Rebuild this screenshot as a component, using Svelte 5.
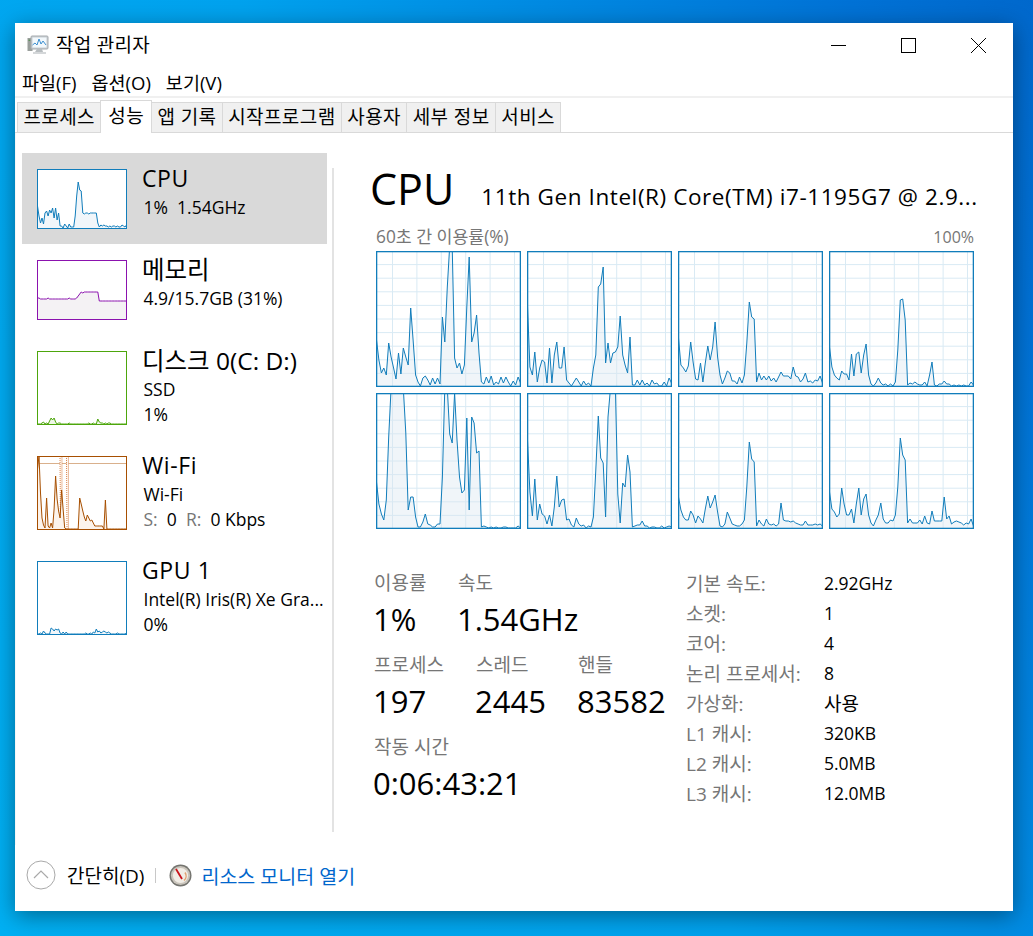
<script>
    const W = 145, H = 136;

    // height above the baseline in px, one value per second
    const cores = [
        [46,26,13,18,11,43,29,18,7,33,12,38,29,21,78,46,11,4,0,8,10,6,1,8,2,8,2,69,44,99,140,140,28,18,23,12,21,79,129,44,53,71,33,4,2,9,3,10,1,4,2,9,3,9,4,0,5,1,9,3],
        [80,19,11,34,4,18,26,24,3,38,3,31,44,18,18,39,6,3,0,4,8,4,0,5,1,3,0,18,31,99,102,119,23,43,23,33,34,39,70,31,21,13,49,1,1,6,1,6,1,3,0,6,2,3,0,0,4,0,8,3],
        [48,21,18,14,20,44,24,7,6,23,4,23,40,26,39,64,29,11,2,8,15,13,5,5,2,9,3,11,43,84,69,67,4,13,6,10,6,10,5,8,4,9,14,10,10,10,7,19,10,9,4,7,13,4,5,3,6,5,10,3],
        [39,19,11,8,6,15,12,12,6,32,10,32,34,13,31,42,11,2,0,3,8,3,1,2,0,2,0,4,36,86,87,66,1,3,2,4,2,1,1,4,0,11,24,1,0,2,2,5,2,2,0,1,0,1,0,1,0,0,4,1],
        [46,24,14,8,28,91,140,140,140,140,140,140,95,18,31,31,11,1,1,6,14,4,3,1,1,4,4,51,140,140,94,85,135,88,51,35,38,110,18,111,105,75,77,1,2,1,0,1,0,1,0,0,1,1,0,0,0,0,2,0],
        [88,36,12,49,8,24,14,12,4,13,2,21,52,21,28,29,8,9,3,1,10,4,2,3,0,2,1,11,58,112,70,65,11,111,140,140,140,34,5,45,41,73,56,1,2,3,3,7,2,2,0,1,1,0,0,2,0,1,2,1],
        [31,18,11,8,8,17,13,5,12,9,5,19,32,20,26,33,16,2,1,4,16,10,4,3,2,2,4,8,41,86,69,66,2,8,4,2,9,4,3,4,2,4,25,8,7,7,6,7,5,4,3,3,7,3,3,3,4,3,4,2],
        [36,19,16,11,14,40,24,13,13,19,5,24,40,13,29,34,13,5,2,8,13,25,9,5,5,8,7,13,41,90,73,68,5,9,5,5,5,8,4,12,5,4,17,7,7,7,7,31,9,12,4,6,7,6,5,3,5,4,9,2]
    ];

    const cpuMini = [22,12,5,10,4,15,17,12,18,15,20,10,20,8,15,2,2,0,4,2,0,4,1,1,1,12,32,46,38,37,15,14,15,15,14,15,15,15,15,15,5,1,3,2,3,2,2,1,2,1,2,2,1,2,1,1,3,2,1,3];
    const memMini = [21,21,20,20,20,20,20,21,20,20,20,20,20,20,20,20,20,20,20,20,20,21,20,20,20,20,21,23,25,27,26,27,27,27,27,27,27,27,27,27,27,18,18,18,18,18,18,18,18,18,18,18,18,18,18,18,18,18,18,18];
    const diskMini = [0,0,0,1,2,0,1,0,3,6,4,6,2,0,1,1,0,0,0,0,0,1,0,0,0,0,0,0,0,0,0,0,0,0,1,0,0,1,0,0,5,2,1,1,0,1,0,1,1,0,0,0,0,0,0,0,0,0,0,0];
    const gpuMini = [0,0,1,0,3,1,0,0,0,6,5,3,5,4,5,1,0,2,0,2,0,0,0,0,0,0,0,0,0,0,0,0,1,0,0,1,0,2,1,5,2,3,1,2,3,2,1,2,1,0,0,0,0,1,0,0,0,0,0,1];
    const wifiMini = [60,73,36,11,4,1,31,3,1,6,1,20,53,30,18,11,39,20,1,0,0,0,0,0,0,0,0,0,31,25,18,12,8,14,11,8,9,6,3,3,3,3,3,3,0,29,0,0,0,0,0,0,0,0,0,0,0,0,0,0];

    function line(vals, w, h) {
        const step = (w - 1) / (vals.length - 1);
        return vals.map((v, i) => `${(0.5 + i * step).toFixed(1)},${(h - 1 - v).toFixed(1)}`).join(' ');
    }
    function area(vals, w, h) {
        return `0.5,${h} ${line(vals, w, h)} ${w - 0.5},${h}`;
    }

    const vLines = [0, 1, 2, 3, 4, 5].map((i) => 16.5 + i * 24.4);
    const hLines = [1, 2, 3, 4, 5, 6, 7, 8, 9].map((i) => i * 13.6);

    const side = [
        { name: 'CPU', sub: ['1%  1.54GHz'], vals: cpuMini, h: 60, stroke: '#117dbb', fill: '#f1f6fa', active: true },
        { name: '메모리', sub: ['4.9/15.7GB (31%)'], vals: memMini, h: 60, stroke: '#8b12ae', fill: '#f4f2f4', ko: true },
        { name: '디스크 0(C: D:)', sub: ['SSD', '1%'], vals: diskMini, h: 74, stroke: '#4da60c', fill: '#eff7e7', ko: true },
        { name: 'Wi-Fi', sub: ['Wi-Fi'], vals: wifiMini, h: 74, stroke: '#a74f01', fill: '#fcf3eb', wifi: true },
        { name: 'GPU 1', sub: ['Intel(R) Iris(R) Xe Gra...', '0%'], vals: gpuMini, h: 74, stroke: '#117dbb', fill: '#f1f6fa' }
    ];

    const specs = [
        ['기본 속도:', '2.92GHz'],
        ['소켓:', '1'],
        ['코어:', '4'],
        ['논리 프로세서:', '8'],
        ['가상화:', '사용'],
        ['L1 캐시:', '320KB'],
        ['L2 캐시:', '5.0MB'],
        ['L3 캐시:', '12.0MB']
    ];

    const tabs = ['프로세스', '성능', '앱 기록', '시작프로그램', '사용자', '세부 정보', '서비스'];
</script>

<div class="desktop">
    <div class="window">
        <div class="titlebar">
            <svg class="app-icon" width="22" height="20" viewBox="0 0 22 20">
                <rect x="0.5" y="3" width="5" height="13" fill="#9a9f9c" />
                <rect x="1.5" y="4.5" width="2" height="1.5" fill="#5f8f5f" />
                <rect x="4" y="1" width="17" height="13" rx="1" fill="#c9ced2" stroke="#a6abaf" />
                <rect x="5.5" y="2.5" width="14" height="10" fill="#f2f8fc" />
                <polyline points="5.5,10 8,8 10,10 12,4 14,9 16,6 19,10" fill="none" stroke="#3d8fd0" />
                <path d="M10 14h5l1 3H8z" fill="#b8bdc0" />
                <rect x="6" y="17" width="13" height="2" fill="#d4d7d9" />
            </svg>
            <span class="title">작업 관리자</span>
            <div class="controls">
                <svg width="15" height="15" viewBox="0 0 15 15"><path d="M0 7.5h15" stroke="#000" stroke-width="1" /></svg>
                <svg width="15" height="15" viewBox="0 0 15 15"><rect x="0.5" y="0.5" width="14" height="14" fill="none" stroke="#000" /></svg>
                <svg width="15" height="15" viewBox="0 0 15 15"><path d="M0 0l15 15M15 0L0 15" stroke="#000" stroke-width="1" /></svg>
            </div>
        </div>

        <div class="menu">
            <span>파일(F)</span>
            <span>옵션(O)</span>
            <span>보기(V)</span>
        </div>

        <div class="tabs">
            {#each tabs as tab, i}
                <div class="tab" class:active={i === 1}>{tab}</div>
            {/each}
        </div>

        <div class="body">
            <div class="sidebar">
                {#each side as item}
                    <div class="item" class:active={item.active}>
                        <svg class="mini" width="90" height={item.h} viewBox="0 0 90 {item.h}">
                            <rect width="90" height={item.h} fill="#fff" />
                            {#if item.wifi}
                                <path d="M0 7.5h90" stroke="#d9b08c" stroke-width="1" />
                                <polyline points="23,0 23.5,74 25,74 25,0" fill="#fdf6f0" stroke="#d9824a" stroke-width="1" stroke-dasharray="1 1" />
                                <polyline points="29.5,0 30,74 31.5,74 31.5,0" fill="#fdf6f0" stroke="#d9824a" stroke-width="1" stroke-dasharray="1 1" />
                            {/if}
                            <polygon points={area(item.vals, 90, item.h)} fill={item.fill} />
                            <polyline points={line(item.vals, 90, item.h)} fill="none" stroke={item.stroke} stroke-width="1" />
                            <rect x="0.5" y="0.5" width="89" height={item.h - 1} fill="none" stroke={item.stroke} />
                        </svg>
                        <div class="info">
                            <div class="name" class:ko={item.ko}>{item.name}</div>
                            {#if item.wifi}
                                <div class="sub">Wi-Fi</div>
                                <div class="sub"><span class="dim">S:</span>{'  0  '}<span class="dim">R:</span>{'  0 Kbps'}</div>
                            {:else}
                                {#each item.sub as s}
                                    <div class="sub">{s}</div>
                                {/each}
                            {/if}
                        </div>
                    </div>
                {/each}
            </div>

            <div class="divider"></div>

            <div class="panel">
                <div class="head">
                    <div class="big">CPU</div>
                    <div class="model">11th Gen Intel(R) Core(TM) i7-1195G7 @ 2.9...</div>
                </div>
                <div class="caption">
                    <span class="cap-ko">60초 간 이용률(%)</span>
                    <span>100%</span>
                </div>
                <div class="charts">
                    {#each cores as vals}
                        <svg width={W} height={H} viewBox="0 0 {W} {H}">
                            <rect width={W} height={H} fill="#fff" />
                            {#each vLines as x}
                                <path d="M{x} 0V{H}" stroke="#d9eaf4" stroke-width="1" />
                            {/each}
                            {#each hLines as y}
                                <path d="M0 {y}H{W}" stroke="#d9eaf4" stroke-width="1" />
                            {/each}
                            <polygon points={area(vals, W, H)} fill="#d9e6f1" fill-opacity="0.4" />
                            <polyline points={line(vals, W, H)} fill="none" stroke="#117dbb" stroke-width="1" />
                            <rect x="0.65" y="0.65" width={W - 1.3} height={H - 1.3} fill="none" stroke="#117dbb" stroke-width="1.3" />
                        </svg>
                    {/each}
                </div>

                <div class="bottom">
                    <div class="stats">
                        <div class="row r1">
                            <div><div class="label">이용률</div><div class="value">1%</div></div>
                            <div><div class="label">속도</div><div class="value">1.54GHz</div></div>
                        </div>
                        <div class="row r2">
                            <div><div class="label">프로세스</div><div class="value">197</div></div>
                            <div><div class="label">스레드</div><div class="value">2445</div></div>
                            <div><div class="label">핸들</div><div class="value">83582</div></div>
                        </div>
                        <div class="row">
                            <div><div class="label">작동 시간</div><div class="value">0:06:43:21</div></div>
                        </div>
                    </div>
                    <div class="specs">
                        {#each specs as [k, v]}
                            <div class="k">{k}</div>
                            <div class="v" class:ko={v === '사용'}>{v}</div>
                        {/each}
                    </div>
                </div>
            </div>
        </div>

        <div class="footer">
            <svg width="30" height="30" viewBox="0 0 30 30">
                <circle cx="15" cy="15" r="14" fill="#fff" stroke="#a9a9a9" />
                <path d="M8 18l7-7 7 7" fill="none" stroke="#a9a9a9" stroke-width="1.2" />
            </svg>
            <span class="less">간단히(D)</span>
            <span class="sep"></span>
            <svg width="23" height="23" viewBox="0 0 23 23">
                <circle cx="11.5" cy="11.5" r="11" fill="#74746f" />
                <circle cx="11.5" cy="11.5" r="9.6" fill="#c9c4bb" />
                <circle cx="11.5" cy="11.5" r="7.6" fill="#f1ede6" />
                <path d="M16 8.5a6 6 0 0 1-1 8" fill="none" stroke="#e0a070" stroke-width="1.5" />
                <path d="M7 5l6 10" stroke="#c8141c" stroke-width="1.8" />
            </svg>
            <span class="link">리소스 모니터 열기</span>
        </div>
    </div>
</div>

<style>
    :global(body) {
        margin: 0;
    }

    .desktop {
        box-sizing: border-box;
        width: 1033px;
        height: 936px;
        padding: 23px 20px 25px 15px;
        background: linear-gradient(62deg, #00b0f3 0%, #00a2ee 48%, #0072d6 88%, #0068cc 100%);
        font-family: "Open Sans", "Noto Sans CJK KR", sans-serif;
        color: #000;
    }

    .window {
        display: flex;
        flex-direction: column;
        height: 888px;
        background: #fff;
        box-shadow: 0 5px 22px rgba(0, 0, 0, 0.4);
    }

    .titlebar {
        display: flex;
        align-items: center;
        height: 44px;
        padding: 0 27px 0 12px;
        flex-shrink: 0;
    }

    .app-icon {
        margin-right: 7px;
    }

    .title {
        font-size: 19px;
        letter-spacing: 0.3px;
        margin-top: -2px;
    }

    .controls {
        margin-left: auto;
        display: flex;
        gap: 55px;
        align-items: center;
    }

    .controls svg {
        display: block;
    }

    .menu {
        display: flex;
        gap: 15px;
        height: 29px;
        padding-left: 7px;
        align-items: center;
        font-size: 18.5px;
        border-bottom: 2px solid #f0f0f0;
        flex-shrink: 0;
    }

    .tabs {
        display: flex;
        align-items: flex-end;
        height: 35px;
        padding-left: 2px;
        border-bottom: 1px solid #d9d9d9;
        flex-shrink: 0;
        box-sizing: border-box;
    }

    .tab {
        height: 29px;
        line-height: 29px;
        padding: 0 5.4px;
        background: #f0f0f0;
        border: 1px solid #d9d9d9;
        border-bottom: none;
        border-right: none;
        font-size: 19px;
        letter-spacing: 0.4px;
        white-space: nowrap;
    }

    .tab:last-child {
        border-right: 1px solid #d9d9d9;
    }

    .tab.active {
        height: 32px;
        line-height: 30px;
        padding: 0 7px;
        background: #fff;
        margin-bottom: -1px;
        border-right: 1px solid #d9d9d9;
        position: relative;
    }

    .tab.active + .tab {
        border-left: none;
    }

    .body {
        flex: 1;
        display: flex;
        min-height: 0;
        border-left: 1px solid #f6f6f6;
    }

    .sidebar {
        width: 310px;
        padding: 20px 0 0 6px;
        box-sizing: content-box;
        flex-shrink: 0;
    }

    .item {
        display: flex;
        width: 305px;
        box-sizing: border-box;
        padding: 16px 0 15px 15px;
        gap: 15px;
    }

    .item.active {
        background: #d9d9d9;
    }

    .mini {
        display: block;
        flex-shrink: 0;
    }

    .info {
        margin: -7px 0 -6px;
        min-width: 0;
    }

    .name {
        font-size: 23px;
        line-height: 33px;
        letter-spacing: 0.6px;
        white-space: nowrap;
    }

    .name.ko {
        font-size: 24.5px;
        letter-spacing: 0;
    }

    .sub {
        font-size: 17.5px;
        line-height: 25px;
        padding-left: 1.5px;
        white-space: pre;
    }

    .dim {
        color: #767676;
    }

    .divider {
        width: 2px;
        margin: 35px 0 13px;
        background: #e3e3e3;
        flex-shrink: 0;
    }

    .panel {
        flex: 1;
        padding-left: 36px;
        min-width: 0;
    }

    .head {
        display: flex;
        align-items: baseline;
        height: 60px;
        margin-top: 26px;
        gap: 27px;
        white-space: nowrap;
    }

    .big {
        font-size: 43px;
        line-height: 60px;
    }

    .model {
        font-size: 22.5px;
        letter-spacing: 0.58px;
    }

    .caption {
        display: flex;
        justify-content: space-between;
        align-items: baseline;
        width: 598px;
        margin: 8px 0 0 6px;
        box-sizing: border-box;
        line-height: 20px;
        font-size: 16px;
        color: #767676;
    }

    .cap-ko {
        font-size: 17.3px;
    }

    .charts {
        display: grid;
        grid-template-columns: repeat(4, 145px);
        grid-auto-rows: 136px;
        gap: 6px;
        margin: 4px 0 0 6px;
    }

    .charts svg {
        display: block;
    }

    .bottom {
        display: flex;
        margin: 42px 0 0 4px;
    }

    .stats {
        width: 312px;
        flex-shrink: 0;
    }

    .row {
        display: flex;
        margin-bottom: 14px;
    }

    .r1 > div:first-child {
        width: 84px;
    }

    .r2 > div {
        width: 102px;
    }

    .label {
        font-size: 19px;
        line-height: 24px;
        color: #767676;
    }

    .value {
        font-size: 31px;
        line-height: 40px;
        margin: 4px 0 0 -1px;
        white-space: nowrap;
    }

    .specs {
        display: grid;
        grid-template-columns: 138px auto;
        grid-auto-rows: 30px;
        align-items: center;
        align-content: start;
        margin-top: -3px;
        font-size: 17.5px;
    }

    .k {
        font-size: 19px;
        color: #767676;
        white-space: nowrap;
    }

    .v.ko {
        font-size: 19px;
    }

    .footer {
        display: flex;
        align-items: center;
        height: 60px;
        margin-bottom: 6px;
        padding-left: 11px;
        flex-shrink: 0;
    }

    .less {
        margin-left: 11px;
        font-size: 19px;
    }

    .sep {
        width: 1px;
        height: 15px;
        margin: 0 13px 0 11px;
        background: #c8c8c8;
    }

    .link {
        margin-left: 9px;
        font-size: 19.5px;
        color: #0066cc;
    }
</style>
